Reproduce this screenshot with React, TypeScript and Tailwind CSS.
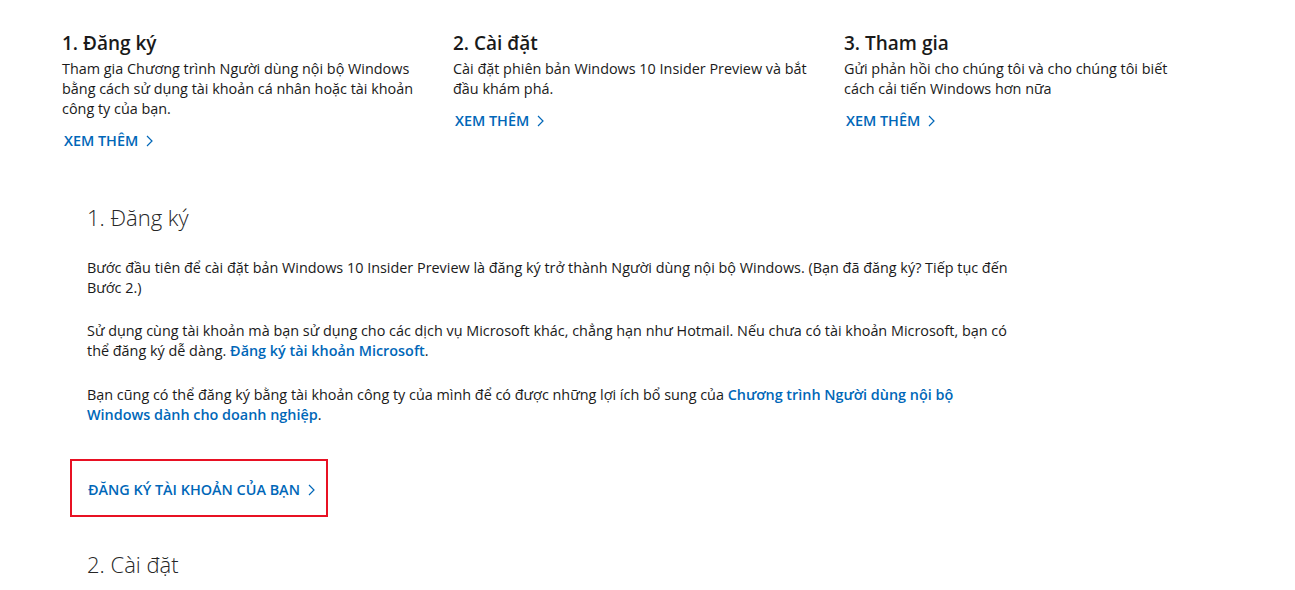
import React from "react"

const font = { fontFamily: '"Segoe UI", "Open Sans", "Noto Sans", sans-serif' }

const Chevron: React.FC = () => (
	<svg width="7" height="12" viewBox="0 0 7 12" className="ml-[8px] inline-block">
		<polyline points="1,1 6,6 1,11" fill="none" stroke="currentColor" strokeWidth="1.2" />
	</svg>
)

const MoreLink: React.FC<{ label: string }> = ({ label }) => (
	<a href="#" className="inline-flex items-center text-[14.4px] font-semibold leading-5 text-[#0067b8]">
		{label}
		<Chevron />
	</a>
)

const steps = [
	{
		title: "1. Đăng ký",
		lines: [
			"Tham gia Chương trình Người dùng nội bộ Windows",
			"bằng cách sử dụng tài khoản cá nhân hoặc tài khoản",
			"công ty của bạn.",
		],
	},
	{
		title: "2. Cài đặt",
		lines: ["Cài đặt phiên bản Windows 10 Insider Preview và bắt", "đầu khám phá."],
	},
	{
		title: "3. Tham gia",
		lines: ["Gửi phản hồi cho chúng tôi và cho chúng tôi biết", "cách cải tiến Windows hơn nữa"],
	},
]

export default function App() {
	return (
		<div className="min-h-[590px] w-full bg-white text-black" style={font}>
			<div className="flex pl-[62px] pt-[30px]">
				{steps.map((s) => (
					<div key={s.title} className="w-[391px] shrink-0">
						<h3 className="text-[19px] font-semibold leading-[26px] text-[#1a1a1a]">{s.title}</h3>
						<p className="mt-[3px] text-[14.4px] leading-5 text-[#1a1a1a]">
							{s.lines.map((l, i) => (
								<React.Fragment key={i}>
									{l}
									{i < s.lines.length - 1 && <br />}
								</React.Fragment>
							))}
						</p>
						<div className="ml-[2px] mt-[9px]">
							<MoreLink label="XEM THÊM" />
						</div>
					</div>
				))}
			</div>

			<div className="pl-[87px] pt-[49px]">
				<h2 className="text-[22px] font-light leading-8 text-[#262626]">1. Đăng ký</h2>
				<div className="mt-[25px] w-[960px] text-[14.4px] leading-5 text-[#1a1a1a]">
					<p>
						Bước đầu tiên để cài đặt bản Windows 10 Insider Preview là đăng ký trở thành Người dùng nội bộ
						Windows. (Bạn đã đăng ký? Tiếp tục đến
						<br />
						Bước 2.)
					</p>
					<p className="mt-[23px]">
						Sử dụng cùng tài khoản mà bạn sử dụng cho các dịch vụ Microsoft khác, chẳng hạn như Hotmail. Nếu
						chưa có tài khoản Microsoft, bạn có
						<br />
						thể đăng ký dễ dàng.{" "}
						<a href="#" className="font-semibold text-[#0067b8]">
							Đăng ký tài khoản Microsoft
						</a>
						.
					</p>
					<p className="mt-6">
						Bạn cũng có thể đăng ký bằng tài khoản công ty của mình để có được những lợi ích bổ sung của{" "}
						<a href="#" className="font-semibold text-[#0067b8]">
							Chương trình Người dùng nội bộ
							<br />
							Windows dành cho doanh nghiệp
						</a>
						.
					</p>
				</div>
			</div>

			<div className="ml-[70px] mt-[34px] inline-flex h-[58px] w-[258px] items-center border-2 border-[#e81123] pl-4 pt-[3px]">
				<MoreLink label="ĐĂNG KÝ TÀI KHOẢN CỦA BẠN" />
			</div>

			<div className="pl-[87px] pt-[31px]">
				<h2 className="text-[22px] font-light leading-8 text-[#262626]">2. Cài đặt</h2>
			</div>
		</div>
	)
}
